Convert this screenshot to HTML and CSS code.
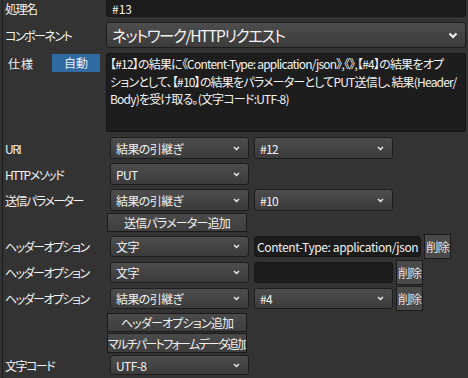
FILE: index.html
```html
<!DOCTYPE html>
<html lang="ja">
<head>
    <meta charset="UTF-8">
    <meta name="viewport" content="width=device-width, initial-scale=1.0">
    <title>HTTPリクエスト設定</title>
    <link rel="stylesheet" href="styles.css">
</head>
<body>
    <div class="page">
        <!-- 処理名 -->
        <div class="row row-name">
            <span class="lbl">処理名</span>
            <div class="field wide">#13</div>
        </div>

        <!-- コンポーネント -->
        <div class="row row-comp">
            <span class="lbl">コンポーネント</span>
            <div class="select big">
                <span>ネットワーク/HTTPリクエスト</span>
                <svg class="chev" width="10" height="7" viewBox="0 0 10 7"><path d="M1.5 1.5 L5 5 L8.5 1.5" fill="none" stroke="#f0f0f0" stroke-width="2"/></svg>
            </div>
        </div>

        <!-- 仕様 -->
        <div class="row row-spec">
            <span class="lbl-spec">仕様</span>
            <span class="badge">自動</span>
            <div class="memo">【#12】の結果に《Content-Type: application/json》,《》,【#4】の結果をオプ<br>ションとして、【#10】の結果をパラメーターとしてPUT送信し、結果(Header/<br>Body)を受け取る。(文字コード:UTF-8)</div>
        </div>

        <div class="row row-sel">
            <span class="lbl">URI</span>
            <div class="select sm first"><span>結果の引継ぎ</span><svg class="chev" width="7" height="5" viewBox="0 0 7 5"><path d="M1 1 L3.5 3.5 L6 1" fill="none" stroke="#e8e8e8" stroke-width="1.5"/></svg></div>
            <div class="select sm second"><span>#12</span><svg class="chev" width="7" height="5" viewBox="0 0 7 5"><path d="M1 1 L3.5 3.5 L6 1" fill="none" stroke="#e8e8e8" stroke-width="1.5"/></svg></div>
        </div>

        <div class="row row-sel">
            <span class="lbl">HTTPメソッド</span>
            <div class="select sm first"><span>PUT</span><svg class="chev" width="7" height="5" viewBox="0 0 7 5"><path d="M1 1 L3.5 3.5 L6 1" fill="none" stroke="#e8e8e8" stroke-width="1.5"/></svg></div>
        </div>

        <div class="row row-sel row-param">
            <span class="lbl">送信パラメーター</span>
            <div class="select sm first"><span>結果の引継ぎ</span><svg class="chev" width="7" height="5" viewBox="0 0 7 5"><path d="M1 1 L3.5 3.5 L6 1" fill="none" stroke="#e8e8e8" stroke-width="1.5"/></svg></div>
            <div class="select sm second"><span>#10</span><svg class="chev" width="7" height="5" viewBox="0 0 7 5"><path d="M1 1 L3.5 3.5 L6 1" fill="none" stroke="#e8e8e8" stroke-width="1.5"/></svg></div>
        </div>

        <div class="row row-btn">
            <span class="lbl"></span>
            <button class="btn">送信パラメーター追加</button>
        </div>

        <!-- ヘッダーオプション -->
        <div class="row row-head">
            <span class="lbl">ヘッダーオプション</span>
            <div class="select sm first"><span>文字</span><svg class="chev" width="7" height="5" viewBox="0 0 7 5"><path d="M1 1 L3.5 3.5 L6 1" fill="none" stroke="#e8e8e8" stroke-width="1.5"/></svg></div>
            <div class="field text long">Content-Type: application/json</div>
            <button class="del">削除</button>
        </div>

        <div class="row row-head">
            <span class="lbl">ヘッダーオプション</span>
            <div class="select sm first"><span>文字</span><svg class="chev" width="7" height="5" viewBox="0 0 7 5"><path d="M1 1 L3.5 3.5 L6 1" fill="none" stroke="#e8e8e8" stroke-width="1.5"/></svg></div>
            <div class="field text"></div>
            <button class="del">削除</button>
        </div>

        <div class="row row-head">
            <span class="lbl">ヘッダーオプション</span>
            <div class="select sm first"><span>結果の引継ぎ</span><svg class="chev" width="7" height="5" viewBox="0 0 7 5"><path d="M1 1 L3.5 3.5 L6 1" fill="none" stroke="#e8e8e8" stroke-width="1.5"/></svg></div>
            <div class="select sm second"><span>#4</span><svg class="chev" width="7" height="5" viewBox="0 0 7 5"><path d="M1 1 L3.5 3.5 L6 1" fill="none" stroke="#e8e8e8" stroke-width="1.5"/></svg></div>
            <button class="del">削除</button>
        </div>

        <div class="row row-btn">
            <span class="lbl"></span>
            <button class="btn">ヘッダーオプション追加</button>
        </div>
        <div class="row row-btn2">
            <span class="lbl"></span>
            <button class="btn tight">マルチパートフォームデータ追加</button>
        </div>

        <div class="row row-sel row-last">
            <span class="lbl">文字コード</span>
            <div class="select sm first"><span>UTF-8</span><svg class="chev" width="7" height="5" viewBox="0 0 7 5"><path d="M1 1 L3.5 3.5 L6 1" fill="none" stroke="#e8e8e8" stroke-width="1.5"/></svg></div>
        </div>
    </div>
</body>
</html>
```

FILE: styles.css
```css
body {
    margin: 0;
    padding: 0;
    background-color: #333333;
    color: #f2f2f2;
    font-family: "Noto Sans CJK JP", sans-serif;
    font-feature-settings: "palt";
    font-size: 12px;
    overflow: hidden;
}

.page {
    margin-left: 2px;
    margin-top: -3px;
    padding-left: 2px;
    border-left: 1px solid #1c1c1c;
    height: 390px;
}

.row {
    display: flex;
    align-items: center;
}

.lbl {
    width: 101px;
    flex-shrink: 0;
    white-space: nowrap;
    letter-spacing: -1.5px;
}

/* 入力欄 */
.field {
    background-color: #1c1c1c;
    border: 1px solid #151515;
    border-radius: 3px;
    box-sizing: border-box;
    padding-left: 5px;
    white-space: nowrap;
    overflow: hidden;
}

.row-name {
    height: 20px;
}

.row-name .lbl {
    padding-top: 2px;
}

.field.wide {
    width: 360px;
    height: 20px;
    line-height: 21px;
    font-size: 12px;
}

/* セレクト */
.select {
    display: flex;
    align-items: center;
    justify-content: space-between;
    box-sizing: border-box;
    border: 1px solid #1d1d1d;
    border-radius: 3px;
    background: linear-gradient(#4d4d4d, #3b3b3b);
    white-space: nowrap;
}

.row-comp {
    margin-top: 5px;
    height: 26px;
}

.select.big {
    width: 360px;
    height: 26px;
    font-size: 15.5px;
    letter-spacing: -1.4px;
    padding: 0 7px 0 5px;
}

.row-spec {
    margin-top: 5px;
    height: 79px;
    align-items: flex-start;
}

.lbl-spec {
    width: 44px;
    padding-left: 3px;
    margin-top: 2px;
    font-size: 12px;
    letter-spacing: 1px;
}

.badge {
    width: 48px;
    height: 18px;
    margin-top: 1px;
    line-height: 18px;
    text-align: center;
    background-color: #2f6aa2;
    color: #e8eef5;
}

.memo {
    margin-left: 6px;
    width: 360px;
    height: 79px;
    box-sizing: border-box;
    background-color: #1d1d1d;
    border: 1px solid #151515;
    border-radius: 2px;
    padding: 1px 0 0 3px;
    line-height: 17.5px;
    font-size: 12px;
    letter-spacing: -0.8px;
    white-space: nowrap;
    overflow: hidden;
}

.row-sel {
    height: 22px;
    margin-top: 5px;
}

.row-sel + .row-sel {
    margin-top: 4px;
}

.select.sm {
    width: 139px;
    height: 22px;
    padding: 0 8px 0 5px;
    font-size: 12px;
    letter-spacing: -0.6px;
}

.select.first {
    margin-left: 4px;
}

.select.second {
    margin-left: 5px;
}

.row-btn {
    height: 19px;
    margin-top: 2px;
}

.btn {
    margin-left: 1px;
    width: 140px;
    height: 19px;
    padding: 0;
    box-sizing: border-box;
    border: 1px solid #1a1a1a;
    background: linear-gradient(#4a4a4a, #3e3e3e);
    color: #f0f0f0;
    font-family: inherit;
    font-feature-settings: "palt";
    font-size: 12px;
    line-height: 17px;
    letter-spacing: -0.8px;
    white-space: nowrap;
    cursor: pointer;
}

.btn.tight {
    height: 20px;
    letter-spacing: -1.7px;
    overflow: hidden;
}

.row-btn2 {
    height: 20px;
    margin-top: 1px;
}

/* ヘッダーオプション行 */
.row-head {
    height: 26px;
    margin-top: 1px;
}

.row-head + .row-head {
    margin-top: 0;
}

.row-head .select.sm {
    height: 21px;
}

.field.text {
    margin-left: 5px;
    width: 139px;
    height: 21px;
    line-height: 19px;
    padding-left: 2px;
    font-size: 12px;
    letter-spacing: -0.4px;
}

.field.long {
    width: 167px;
}

.del {
    margin-left: 3px;
    width: 27px;
    height: 25px;
    padding: 0;
    box-sizing: border-box;
    border: 1px solid #1c1c1c;
    background-color: #4a4a4a;
    color: #e0e0e0;
    font-family: inherit;
    font-size: 12.5px;
    letter-spacing: -1px;
    white-space: nowrap;
    overflow: hidden;
    cursor: pointer;
}

.row-last {
    margin-top: 2px;
    height: 20px;
}

.row-last .select.sm {
    height: 20px;
}
```
